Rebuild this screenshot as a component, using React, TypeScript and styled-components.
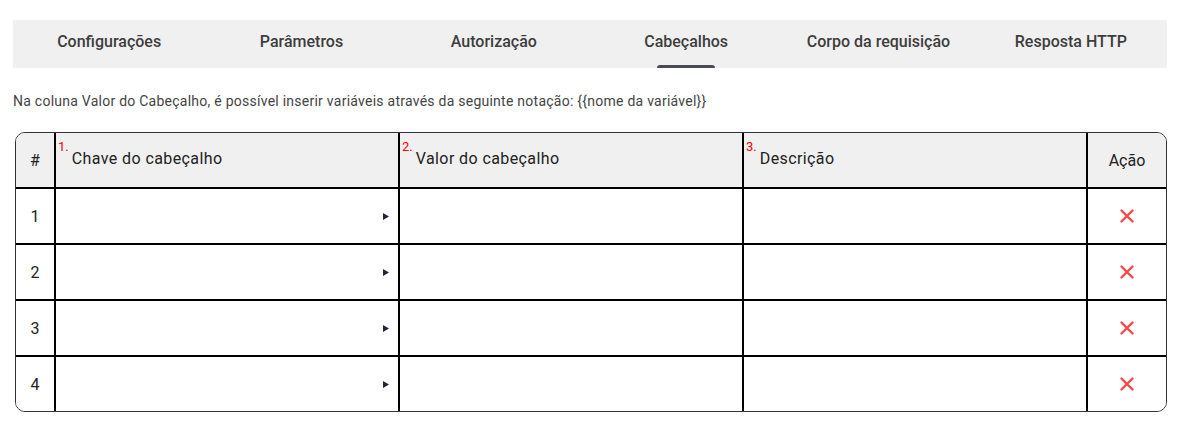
import React from 'react';
import styled, { createGlobalStyle } from 'styled-components';

const GlobalStyle = createGlobalStyle`
    body {
        margin: 0;
        background: white;
        font-family: Roboto, "Liberation Sans", Arial, sans-serif;
    }
    * {
        box-sizing: border-box;
    }
`;

const Page = styled.div`
    padding: 20px 11px 0 13px;
    width: 1178px;
`;

const TabBar = styled.nav`
    display: grid;
    grid-template-columns: repeat(6, 1fr);
    height: 48px;
    background: #f0f0f0;
`;

const Tab = styled.button<{ $active?: boolean }>`
    position: relative;
    display: flex;
    align-items: center;
    justify-content: center;
    padding: 0 0 6px;
    border: none;
    background: transparent;
    font-family: Roboto, "Liberation Sans", Arial, sans-serif;
    font-size: 16px;
    font-weight: 500;
    color: #3d3d3d;
    cursor: pointer;

    &::after {
        content: '';
        display: ${(p) => (p.$active ? 'block' : 'none')};
        position: absolute;
        bottom: 0;
        left: 35%;
        width: 30%;
        height: 3px;
        border-radius: 3px 3px 0 0;
        background: #4a4a52;
    }
`;

const Hint = styled.p`
    margin: 24px 0 22px;
    font-size: 14px;
    line-height: 18px;
    letter-spacing: 0.25px;
    color: #444;
`;

const TableWrap = styled.div`
    margin-left: 2px;
    border: 1px solid #333;
    border-radius: 10px;
    overflow: hidden;
`;

const Row = styled.div<{ $head?: boolean }>`
    display: grid;
    grid-template-columns: 38px 344px 344px 344px 80px;
    height: ${(p) => (p.$head ? '54px' : '56px')};
    background: ${(p) => (p.$head ? '#f0f0f0' : 'white')};
    border-top: ${(p) => (p.$head ? 'none' : '2px solid #000')};
`;

const Cell = styled.div<{ $first?: boolean; $center?: boolean }>`
    display: flex;
    align-items: center;
    justify-content: ${(p) => (p.$center ? 'center' : 'flex-start')};
    border-left: ${(p) => (p.$first ? 'none' : '2px solid #000')};
    font-size: 16px;
    color: #222;
`;

const HeadCell = styled.div`
    display: flex;
    align-items: flex-start;
    gap: 3px;
    padding: 6px 0 0 2px;
    border-left: 2px solid #000;
`;

const Num = styled.span`
    font-size: 13px;
    line-height: 15px;
    color: #ff0000;
`;

const HeadLabel = styled.span`
    margin-top: 11px;
    font-size: 16px;
    line-height: 18px;
    letter-spacing: 0.4px;
    color: #222;
`;

const KeyCell = styled(Cell)`
    justify-content: flex-end;
    padding-right: 9px;
`;

const DeleteButton = styled.button`
    display: flex;
    padding: 0;
    border: none;
    background: transparent;
    cursor: pointer;
`;

const tabs = [
    'Configurações',
    'Parâmetros',
    'Autorização',
    'Cabeçalhos',
    'Corpo da requisição',
    'Resposta HTTP',
];

const columns = ['Chave do cabeçalho', 'Valor do cabeçalho', 'Descrição'];

function Caret() {
    return (
        <svg width="6" height="7" viewBox="0 0 6 7" aria-hidden="true">
            <path d="M0 0 L6 3.5 L0 7 Z" fill="#1d2636" />
        </svg>
    );
}

function Cross() {
    return (
        <svg width="14" height="14" viewBox="0 0 14 14" aria-hidden="true">
            <path
                d="M1.5 1.5 L12.5 12.5 M12.5 1.5 L1.5 12.5"
                stroke="#ff4646"
                strokeWidth="2.4"
                strokeLinecap="round"
            />
        </svg>
    );
}

export default function App() {
    return (
        <Page>
            <GlobalStyle />
            <TabBar>
                {tabs.map((t) => (
                    <Tab key={t} type="button" $active={t === 'Cabeçalhos'}>
                        {t}
                    </Tab>
                ))}
            </TabBar>

            <Hint>
                Na coluna Valor do Cabeçalho, é possível inserir variáveis através da seguinte
                notação: {'{{nome da variável}}'}
            </Hint>

            <TableWrap>
                <Row $head>
                    <Cell $first $center>#</Cell>
                    {columns.map((c, i) => (
                        <HeadCell key={c}>
                            <Num>{i + 1}.</Num>
                            <HeadLabel>{c}</HeadLabel>
                        </HeadCell>
                    ))}
                    <Cell $center>Ação</Cell>
                </Row>
                {[1, 2, 3, 4].map((n) => (
                    <Row key={n}>
                        <Cell $first $center>{n}</Cell>
                        <KeyCell>
                            <Caret />
                        </KeyCell>
                        <Cell />
                        <Cell />
                        <Cell $center>
                            <DeleteButton type="button" aria-label="Remover">
                                <Cross />
                            </DeleteButton>
                        </Cell>
                    </Row>
                ))}
            </TableWrap>
        </Page>
    );
}
